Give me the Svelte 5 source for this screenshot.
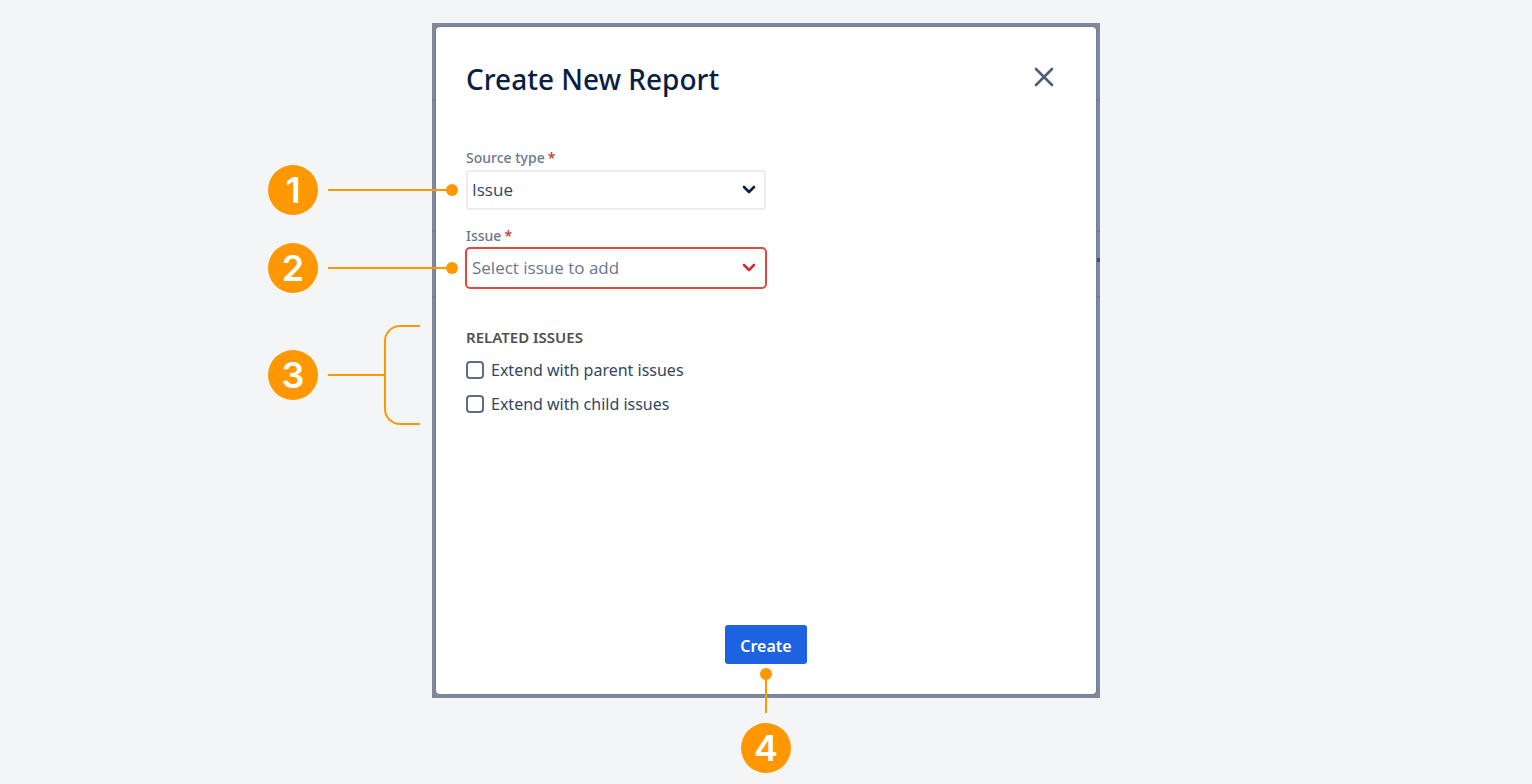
<script>
  let source = 'issue';
  let issue = '';
  let parents = false;
  let children = false;
</script>

<main class="page">
  <div class="backdrop">
    <span class="rule first"></span>
    <span class="rule second"></span>
    <span class="rule third"></span>
    <span class="speck"></span>

    <form class="dialog" on:submit|preventDefault>
      <header>
        <h1>Create New Report</h1>
        <button class="close" type="button" aria-label="Close">
          <svg width="20" height="20" viewBox="0 0 20 20">
            <path d="M2 2 18 18M18 2 2 18" />
          </svg>
        </button>
      </header>

      <div class="field">
        <label for="source">Source type<span class="required">*</span></label>
        <div class="control">
          <select id="source" bind:value={source}>
            <option value="issue">Issue</option>
          </select>
          <svg class="chevron" width="14" height="10" viewBox="0 0 14 10">
            <path d="M2 2 7 7 12 2" />
          </svg>
          <div class="callout">
            <span class="badge">1</span>
            <span class="line"></span>
            <span class="dot"></span>
          </div>
        </div>
      </div>

      <div class="field">
        <label for="issue">Issue<span class="required">*</span></label>
        <div class="control invalid">
          <select id="issue" bind:value={issue}>
            <option value="">Select issue to add</option>
          </select>
          <svg class="chevron" width="14" height="10" viewBox="0 0 14 10">
            <path d="M2 2 7 7 12 2" />
          </svg>
          <div class="callout">
            <span class="badge">2</span>
            <span class="line"></span>
            <span class="dot"></span>
          </div>
        </div>
      </div>

      <fieldset>
        <legend>RELATED ISSUES</legend>
        <label class="option">
          <input type="checkbox" bind:checked={parents} />
          Extend with parent issues
        </label>
        <label class="option">
          <input type="checkbox" bind:checked={children} />
          Extend with child issues
        </label>
        <div class="callout group">
          <span class="badge">3</span>
          <span class="line"></span>
          <span class="bracket"></span>
        </div>
      </fieldset>

      <footer>
        <button class="create" type="submit">Create</button>
        <div class="callout below">
          <span class="dot"></span>
          <span class="line"></span>
          <span class="badge">4</span>
        </div>
      </footer>
    </form>
  </div>
</main>

<style>
  :global(body) {
    margin: 0;
    background: #f3f5f7;
  }

  .page {
    box-sizing: border-box;
    display: flex;
    justify-content: center;
    align-items: flex-start;
    min-height: 100vh;
    padding: 23px 0 86px;
    font-family: 'Noto Sans', 'Open Sans', sans-serif;
    color: #344563;
  }

  .backdrop {
    position: relative;
    box-sizing: border-box;
    width: 668px;
    padding: 4px;
    background: #7f899e;
  }

  .rule {
    position: absolute;
    left: 0;
    right: 0;
    height: 2px;
    background: #747e96;
  }

  .first {
    top: 76px;
  }

  .second {
    top: 207px;
  }

  .third {
    top: 273px;
  }

  .speck {
    position: absolute;
    top: 235px;
    right: 0;
    width: 3px;
    height: 4px;
    background: #2c529c;
  }

  .dialog {
    position: relative;
    padding: 32px 30px 30px;
    border-radius: 4px;
    background: #fff;
    box-shadow: 0 0 1px 1px #747e96;
  }

  header {
    display: flex;
    justify-content: space-between;
    align-items: center;
    margin-bottom: 50px;
  }

  h1 {
    margin: 0;
    font-size: 28px;
    line-height: 40px;
    font-weight: 500;
    color: #091e42;
  }

  button {
    border: 0;
    font-family: inherit;
    cursor: pointer;
  }

  .close {
    display: flex;
    margin: 0 12px 4px 0;
    padding: 0;
    background: none;
  }

  svg {
    fill: none;
    stroke-linecap: round;
    stroke-linejoin: round;
  }

  .close svg {
    stroke: #505f79;
    stroke-width: 2.6;
  }

  .field {
    width: 300px;
    margin-bottom: 17px;
  }

  .field label {
    display: block;
    margin-bottom: 3px;
    font-size: 14px;
    line-height: 18px;
    font-weight: 500;
    color: #6b778c;
  }

  .required {
    margin-left: 3px;
    color: #c9372c;
  }

  .control {
    position: relative;
  }

  select {
    appearance: none;
    display: block;
    box-sizing: border-box;
    width: 100%;
    height: 40px;
    padding: 0 32px 2px 4px;
    border: 2px solid #ebecf0;
    border-radius: 4px;
    background: #fff;
    font-family: 'Open Sans', 'Noto Sans', sans-serif;
    font-size: 17px;
    color: #344563;
  }

  .invalid select {
    border-color: transparent;
    outline: 2px solid #e2483d;
    outline-offset: -1px;
    color: #6b778c;
  }

  .chevron {
    position: absolute;
    top: 15px;
    right: 10px;
    stroke: #091e42;
    stroke-width: 2.6;
    pointer-events: none;
  }

  .invalid .chevron {
    stroke: #d32f2f;
  }

  fieldset {
    position: relative;
    margin: 0 0 209px;
    padding: 23px 0 0;
    border: 0;
  }

  legend {
    float: left;
    width: 100%;
    margin-bottom: 12px;
    padding: 0;
    font-size: 15px;
    line-height: 18px;
    font-weight: 600;
    color: #505050;
  }

  .option {
    display: flex;
    clear: both;
    align-items: center;
    gap: 7px;
    font-size: 16px;
    line-height: 24px;
  }

  .option + .option {
    margin-top: 10px;
  }

  input {
    appearance: none;
    box-sizing: border-box;
    width: 18px;
    height: 18px;
    margin: 0;
    border: 2px solid #5e6c84;
    border-radius: 4px;
    background: #fff;
  }

  input:checked {
    background: #1d62e0;
  }

  footer {
    position: relative;
    display: flex;
    justify-content: center;
  }

  .create {
    height: 39px;
    padding: 2px 15px 0;
    border-radius: 3px;
    background: #1d62e0;
    font-size: 16px;
    font-weight: 600;
    color: #fff;
  }

  .callout {
    position: absolute;
    top: -5px;
    right: calc(100% + 8px);
    display: flex;
    align-items: center;
    pointer-events: none;
  }

  .badge {
    width: 50px;
    margin-right: 10px;
    border-radius: 50%;
    background: #ff9800;
    font-family: Inter, sans-serif;
    font-size: 36px;
    line-height: 50px;
    font-weight: 600;
    text-align: center;
    color: #fff;
  }

  .line {
    width: 120px;
    height: 2px;
    background: #ff9800;
  }

  .dot {
    width: 12px;
    height: 12px;
    margin-left: -2px;
    border-radius: 50%;
    background: #ff9800;
  }

  .group {
    top: 20px;
    right: calc(100% + 46px);
  }

  .group .line {
    width: 56px;
  }

  .bracket {
    box-sizing: border-box;
    width: 36px;
    height: 100px;
    border: 2px solid #ff9800;
    border-right: 0;
    border-radius: 16px 0 0 16px;
  }

  .below {
    top: calc(100% + 4px);
    right: auto;
    flex-direction: column;
  }

  .below .line {
    width: 2px;
    height: 34px;
    margin: -1px 0 10px;
  }

  .below .dot,
  .below .badge {
    margin: 0;
  }
</style>
